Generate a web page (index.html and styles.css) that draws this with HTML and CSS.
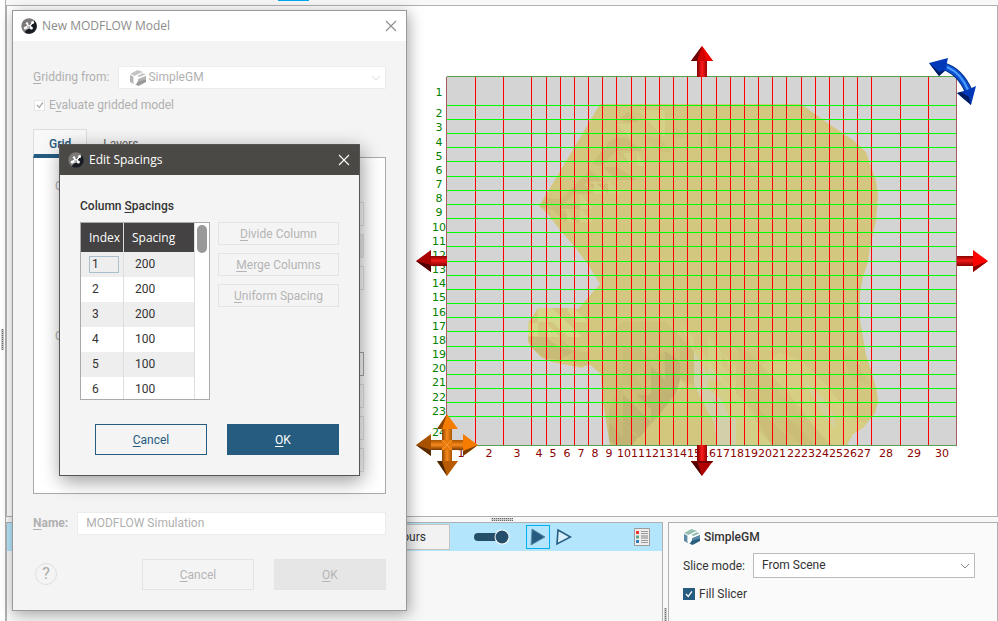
FILE: index.html
```html
<!DOCTYPE html>
<html lang="en">
<head>
<meta charset="utf-8">
<title>New MODFLOW Model</title>
<link rel="stylesheet" href="styles.css">
</head>
<body>
<svg class="defs" width="0" height="0" aria-hidden="true">
  <defs>
    <symbol id="app" viewBox="0 0 16 16">
      <circle cx="8" cy="8" r="7.7" fill="#7d7979"/>
      <path d="M13.6 2.7A7.700 7.700 0 0 1 3.400 14.200L7 11z" fill="#191b22"/>
      <path d="M4.200 9.800 6.600 7.800H9L11.600 4.600M6 5.200 7.400 7.600M9 7.800 10.200 9.800 5 10.200" fill="none" stroke="#fff" stroke-width="1.200"/>
      <circle cx="11.600" cy="4.600" r="1.500" fill="#fff"/><circle cx="6" cy="5.400" r="1.200" fill="#fff"/><circle cx="4.200" cy="10" r="1.500" fill="#fff"/><circle cx="10.400" cy="10" r="1.500" fill="#fff"/>
    </symbol>
    <symbol id="close" viewBox="0 0 12 12"><path d="M1 1 11 11M11 1 1 11" fill="none" stroke="currentColor" stroke-width="1.1"/></symbol>
    <symbol id="chev" viewBox="0 0 10 6"><path d="M1 1 5 5 9 1" fill="none" stroke="currentColor"/></symbol>
    <symbol id="tick" viewBox="0 0 8 8"><path d="M1 4 3.2 6.4 7 1.4" fill="none" stroke="currentColor" stroke-width="1.3"/></symbol>
    <symbol id="cube" viewBox="0 0 16 16">
      <path class="c1" d="M0 4 7.500 0 13 2 5 6z"/>
      <path class="c2" d="M0 5 4 7V14L0 12z"/>
      <path class="c1" d="M7 5.500 12.500 3.200 16 4.500 9.500 7.300z"/>
      <path class="c2" d="M8 9 16 5.500V9L8 12.500z"/>
      <path class="c3" d="M7 12 16 9V12L8.500 16 5.500 14.600z"/>
      <path d="M4 13V7L11.500 3M6.500 13.500V8L9 7.800 16 5" fill="none" stroke="#fff" stroke-width="1.200"/>
    </symbol>
    <linearGradient id="rv"><stop offset="0" stop-color="#7a0000"/><stop offset=".5" stop-color="#ff1c1c"/><stop offset="1" stop-color="#900"/></linearGradient>
    <linearGradient id="rh" x2="0" y2="1"><stop offset="0" stop-color="#8a0000"/><stop offset=".45" stop-color="#f01818"/><stop offset="1" stop-color="#800"/></linearGradient>
    <linearGradient id="ov"><stop offset="0" stop-color="#8a4300"/><stop offset=".5" stop-color="#f98a1c"/><stop offset="1" stop-color="#a85400"/></linearGradient>
    <linearGradient id="oh" x2="0" y2="1"><stop offset="0" stop-color="#a85400"/><stop offset=".5" stop-color="#f98a1c"/><stop offset="1" stop-color="#7a3a00"/></linearGradient>
    <clipPath id="body"><path d="M600 104H801L829 124 853 140 866 152 871 166 876 181 878 195 877 208 876 221 872 238 870 247 868 262 863 277 860 293V320L863 337 866 355 872 373 877 392 878 402 875 413 863 428 853 434 847 445H610L603 403 601 374 589 364 582 368 567 365 552 362 542 358 532 348 528 342V323L538 308H568L578 309 600 284 587 263 574 246 560 230 547 213 539 206 547 193 574 148z"/></clipPath>
  </defs>
</svg>

<div class="app">
  <div class="rail"><span class="grip grip-v"></span></div>
  <main class="main">
    <div class="strip"><span class="strip-tab"></span></div>
    <section class="scene">
      <svg class="scene-svg" width="590" height="510" viewBox="407 6 590 510" role="img" aria-label="Model grid">
        <rect x="446" y="76" width="511" height="370" fill="#d4d4d4"/>
        <g clip-path="url(#body)">
          <rect x="520" y="100" width="370" height="350" fill="#d3c77f"/>
          <g fill="#c9ba76" opacity=".7">
            <path d="M592 164 608 142 616 138H627L641 150 655 151H616L602 166z"/>
            <path d="M620 119 628 112 640 122H625zM575 185 590 170 603 181H590L575 190z"/>
            <path d="M539 206 547 198 560 199 575 185 582 182 592 194H575L562 205H580L594 209H547z"/>
            <path d="M552 209H560L580 222H566zM588 184H610L622 194H602zM603 167H617L637 180H617z"/>
            <path d="M616 152H631V166zM645 138H659V152zM659 138 673 152H659zM673 124 687 138H673z" opacity=".6"/>
            <path d="M708 124 722 150 708 145zM744 160 760 176H744z" opacity=".4"/>
          </g>
          <g fill="#d6d58c" opacity=".7">
            <path d="M638 110H651L665 124V138L651 124zM651 110 665 110V124zM616 124 631 138V124z"/>
            <path d="M623 153 631 153V166zM637 152 645 166H637zM580 209V194L594 209zM580 209 594 222H580zM594 194V181L608 194z"/>
            <path d="M567 208 574 222H567zM608 181 622 194H608z"/>
          </g>
          <g fill="#d6d88f" opacity=".8">
            <path d="M538 308H552V322H538zM552 308 567 322V336L552 322zM567 308H574L588 322H574zM546 323 560 337H546zM567 322 582 337H567zM528 323H538V336H528z"/>
          </g>
          <g fill="#c0b272">
            <path d="M528 337H545L560 348 575 351 560 360 545 358 532 348z" opacity=".6"/>
            <path d="M560 337 574 350 588 353V366L574 364 560 350z" opacity=".3"/>
          </g>
          <g fill="#c8ba76">
            <path d="M603 340 623 322 666 322 680 337 694 352V385L680 380 660 415 632 445H609L603 395z" opacity=".45"/>
            <path d="M623 346H637L651 360 665 351 680 361V380L676 393 662 411 650 425 632 445H609V410L616 395 623 380z" opacity=".6"/>
            <path d="M680 338 694 351V385L680 378z" opacity=".6"/>
          </g>
          <g fill="#b3a66e" opacity=".45">
            <path d="M623 394 637 408 651 422 640 437 623 423zM651 366 665 380 680 380 676 393 662 411 651 422V409L637 395 651 395z"/>
            <path d="M665 366 680 380H665zM609 408 623 423 637 437 632 445H616L609 440zM665 351 680 362V380L665 366z"/>
            <path d="M651 394 665 394 672 397 658 415zM637 408 651 422 640 437H637z"/>
          </g>
          <g fill="#d4c780" opacity=".35">
            <path d="M609 408V423L623 437V423zM623 380V394L637 408V394zM637 366V380L651 394V380zM651 352V366L665 380V366zM637 408 651 422V408z"/>
          </g>
          <path d="M680 380 686 386 682 387 678 392z" fill="#d7d08d"/>
          <path d="M694 350H701L717 372 744 402 772 445H717L715 423 694 385z" fill="#d6d78d" opacity=".5"/>
          <path d="M708 337 722 352V366L736 380V395L722 382 708 366zM680 324 694 337V352zM722 352 736 366V380z" fill="#d6d78d" opacity=".5"/>
          <path d="M694 352 701 362 708 376V388L722 400 729 416 736 420V445H717L714 423 694 385z" fill="#d2d0b6" opacity=".75"/>
          <path d="M708 366 721 378 719 381 708 380z" fill="#d2d0b6" opacity=".6"/>
          <path d="M780 352 800 360 826 384 850 416 868 424 850 445H832L780 392 760 366z" fill="#d6d68a" opacity=".45"/>
          <path d="M808 385 822 396 835 418 835 430 820 410zM801 375 808 385 820 398 812 396z" fill="#d4d2ac" opacity=".6"/>
          <path d="M737 345 757 360 790 395 828 445H772L744 395z" fill="#cbbc76" opacity=".4"/>
          <path d="M758 408 772 422 786 436V445H772L758 430zM786 416 801 430 815 445H801L786 430z" fill="#c6b774" opacity=".4"/>
          <path d="M843 352 857 362 870 385 850 378z" fill="#cbbc76" opacity=".4"/>
        </g>
        <path d="M475.500 77V445M503.500 77V445M531.500 77V445M546.500 77V445M560.500 77V445M574.500 77V445M588.500 77V445M602.500 77V445M616.500 77V445M631.500 77V445M645.500 77V445M659.500 77V445M673.500 77V445M687.500 77V445M701.500 77V445M716.500 77V445M730.500 77V445M744.500 77V445M758.500 77V445M772.500 77V445M786.500 77V445M801.500 77V445M815.500 77V445M829.500 77V445M843.500 77V445M857.500 77V445M871.500 77V445M900.500 77V445M928.500 77V445" stroke="#f00"/>
        <path d="M447 105.500H956M447 119.500H956M447 133.500H956M447 147.500H956M447 161.500H956M447 176.500H956M447 190.500H956M447 204.500H956M447 218.500H956M447 232.500H956M447 246.500H956M447 261.500H956M447 275.500H956M447 289.500H956M447 303.500H956M447 317.500H956M447 331.500H956M447 346.500H956M447 360.500H956M447 374.500H956M447 388.500H956M447 402.500H956M447 416.500H956" stroke="#0f0"/>
        <path d="M447 76.500H957M447 445.500H957" stroke="#55a055"/>
        <path d="M446.500 77V446M956.500 77V446" stroke="#a85c5c"/>
        <g class="row-label">
          <text x="439" y="96">1</text><text x="439" y="117">2</text><text x="439" y="131">3</text><text x="439" y="146">4</text><text x="439" y="160">5</text><text x="439" y="174">6</text><text x="439" y="188">7</text><text x="439" y="202">8</text><text x="439" y="216">9</text><text x="439" y="231">10</text><text x="439" y="245">11</text><text x="439" y="259">12</text><text x="439" y="273">13</text><text x="439" y="287">14</text><text x="439" y="301">15</text><text x="439" y="316">16</text><text x="439" y="330">17</text><text x="439" y="344">18</text><text x="439" y="358">19</text><text x="439" y="372">20</text><text x="439" y="386">21</text><text x="439" y="401">22</text><text x="439" y="415">23</text><text x="439" y="436">24</text>
        </g>
        <g class="col-label">
          <text x="461" y="457">1</text><text x="489" y="457">2</text><text x="517" y="457">3</text><text x="539" y="457">4</text><text x="553" y="457">5</text><text x="567" y="457">6</text><text x="581" y="457">7</text><text x="595" y="457">8</text><text x="609" y="457">9</text><text x="624" y="457">10</text><text x="638" y="457">11</text><text x="652" y="457">12</text><text x="666" y="457">13</text><text x="680" y="457">14</text><text x="694" y="457">15</text><text x="709" y="457">16</text><text x="723" y="457">17</text><text x="737" y="457">18</text><text x="751" y="457">19</text><text x="765" y="457">20</text><text x="779" y="457">21</text><text x="794" y="457">22</text><text x="808" y="457">23</text><text x="822" y="457">24</text><text x="836" y="457">25</text><text x="850" y="457">26</text><text x="864" y="457">27</text><text x="886" y="457">28</text><text x="914" y="457">29</text><text x="942" y="457">30</text>
        </g>
        <rect x="697" y="60" width="10" height="17" fill="url(#rv)"/>
        <path d="M702 46 713 61H691z" fill="#d00000"/><path d="M702 46 691 61H697z" fill="#6a0000"/><path d="M702 46 707 61H713z" fill="#f00000"/>
        <rect x="697" y="445" width="10" height="17" fill="url(#rv)"/>
        <path d="M702 476 713 461H691z" fill="#b00000"/><path d="M702 476 691 461H697z" fill="#4a0000"/><path d="M691 461H713L712 463H692z" fill="#700000"/>
        <rect x="430" y="256" width="17" height="10" fill="url(#rh)"/>
        <path d="M416 261 431 250V272z" fill="#a80000"/><path d="M416 261 431 265V272z" fill="#500000"/>
        <rect x="957" y="256" width="17" height="10" fill="url(#rh)"/>
        <path d="M988 261 973 250V272z" fill="#ff0000"/><path d="M988 261 973 267V272z" fill="#8a0000"/>
        <rect x="442" y="428" width="10" height="34" fill="url(#ov)"/>
        <rect x="430" y="440" width="34" height="10" fill="url(#oh)"/>
        <path d="M442 440H452V450H442z" fill="#e87a0c"/><path d="M442 440 452 450M442 450 452 440" stroke="#f99a38"/>
        <path d="M447 414 458 429H437z" fill="#f57c00"/><path d="M447 414 437 429H442z" fill="#8a4300"/>
        <path d="M478 445 463 434V456z" fill="#f57c00"/><path d="M478 445 463 451V456z" fill="#7a3a00"/>
        <path d="M447 476 458 461H437z" fill="#b85a00"/><path d="M447 476 437 461H442z" fill="#4a2400"/>
        <path d="M416 445 431 434V456z" fill="#a85200"/><path d="M416 445 431 450V456z" fill="#5a2b00"/>
        <path d="M943 66Q960 71 969 92" fill="none" stroke="#002a7a" stroke-width="8"/>
        <path d="M943 66Q960 71 969 92" fill="none" stroke="#0a50d0" stroke-width="6"/>
        <path d="M947 67Q961 73 968 90" fill="none" stroke="#4a9cff" stroke-width="2"/>
        <path d="M929 63 948 58 945 71 939 76z" fill="#0038b8"/><path d="M929 63 939 72 945 70 939 76z" fill="#001c60"/>
        <path d="M971 105 976 86 967 90 957 93z" fill="#0038b8"/><path d="M971 105 957 93 961 92 969 97z" fill="#001c60"/>
      </svg>
    </section>
    <div class="split-h"><span class="grip grip-h"></span></div>
    <div class="bottom">
      <section class="shapes">
        <div class="toolbar">
          <button class="tb-text" type="button">Contours</button>
          <button class="tb-icon toggle" type="button" aria-label="Toggle"><svg width="36" height="16" viewBox="0 0 36 16"><rect x="0" y="4" width="30" height="8" rx="4" fill="#254e6a"/><circle cx="28" cy="8" r="7.5" fill="#fff"/><circle cx="28" cy="8" r="6.500" fill="#254e6a"/></svg></button>
          <button class="tb-icon active" type="button" aria-label="Filled"><svg width="16" height="18" viewBox="0 0 16 18"><path d="M2 1 15 9 1 17z" fill="#265c80" stroke="#5d8ca8"/></svg></button>
          <button class="tb-icon" type="button" aria-label="Outline"><svg width="16" height="18" viewBox="0 0 16 18"><path d="M2 2 14.500 9 1 16z" fill="#d8f0fc" stroke="#265c80" stroke-width="1.600"/></svg></button>
          <button class="tb-icon legend" type="button" aria-label="Legend"><svg width="16" height="18" viewBox="0 0 16 18"><path d="M.5.5H15.500V17.500H.5z" fill="#eee" stroke="#9b9b9b"/><path d="M2 3h3v3H2z" fill="#e33"/><path d="M2 7.500h3v3H2z" fill="#5aa888"/><path d="M2 12h3v3H2z" fill="#3478b8"/><path d="M7 3.500h7M7 5.500h7M7 12.500h7M7 14.500h7" stroke="#999"/><path d="M7 7h7v4H7z" fill="#b8b8b8"/></svg></button>
        </div>
      </section>
      <div class="split-v"><span class="grip grip-v"></span></div>
      <section class="props">
        <h2 class="props-title"><svg class="cube teal" width="16" height="16"><use href="#cube"/></svg>SimpleGM</h2>
        <div class="props-row">
          <label for="slice">Slice mode:</label>
          <span class="combo"><select id="slice"><option>From Scene</option></select><svg class="chev" width="10" height="6"><use href="#chev"/></svg></span>
        </div>
        <label class="check on"><span class="box"><input type="checkbox" checked><svg width="8" height="8"><use href="#tick"/></svg></span>Fill Slicer</label>
      </section>
    </div>
  </main>
</div>

<div class="window model" role="dialog" aria-labelledby="t1">
  <header class="titlebar"><svg width="16" height="16"><use href="#app"/></svg><span id="t1">New MODFLOW Model</span><button class="close" type="button" aria-label="Close"><svg width="12" height="12"><use href="#close"/></svg></button></header>
  <div class="model-body">
    <div class="field">
      <label for="from"><u>G</u>ridding from:</label>
      <span class="combo"><svg class="cube gray" width="16" height="16"><use href="#cube"/></svg><select id="from" disabled><option>SimpleGM</option></select><svg class="chev" width="10" height="6"><use href="#chev"/></svg></span>
    </div>
    <label class="check"><span class="box"><input type="checkbox" checked disabled><svg width="8" height="8"><use href="#tick"/></svg></span><span>E<u>v</u>aluate gridded model</span></label>
    <div class="tabs"><button class="tab current" type="button">Grid</button><button class="tab" type="button">Layers</button></div>
    <div class="panel">
      <div class="group"><span>C</span><div class="group-items"><button disabled type="button" aria-label="Item"></button><button class="dim" disabled type="button" aria-label="Item"></button><button disabled type="button" aria-label="Item"></button></div></div>
      <div class="group"><span>C</span><div class="group-items"><button class="strong" disabled type="button" aria-label="Item"></button><button disabled type="button" aria-label="Item"></button><button disabled type="button" aria-label="Item"></button><button disabled type="button" aria-label="Item"></button></div></div>
    </div>
    <div class="field name-field"><label for="name"><u>N</u>ame:</label><input id="name" type="text" value="MODFLOW Simulation" disabled></div>
    <footer class="actions"><button class="help" type="button" disabled>?</button><button class="btn" type="button" disabled><u>C</u>ancel</button><button class="btn solid" type="button" disabled><u>O</u>K</button></footer>
  </div>
</div>

<div class="window spacing" role="dialog" aria-labelledby="t2">
  <header class="titlebar dark"><svg width="16" height="16"><use href="#app"/></svg><span id="t2">Edit Spacings</span><button class="close" type="button" aria-label="Close"><svg width="12" height="12"><use href="#close"/></svg></button></header>
  <div class="spacing-body">
    <h2 class="spacing-title">Column <u>S</u>pacings</h2>
    <div class="columns">
      <div class="list">
        <table>
          <thead><tr><th>Index</th><th>Spacing</th></tr></thead>
          <tbody>
            <tr><td class="editing"><input type="text" value="1" aria-label="Index"></td><td>200</td></tr>
            <tr><td>2</td><td>200</td></tr>
            <tr><td>3</td><td>200</td></tr>
            <tr><td>4</td><td>100</td></tr>
            <tr><td>5</td><td>100</td></tr>
            <tr><td>6</td><td>100</td></tr>
          </tbody>
        </table>
        <span class="thumb"></span>
      </div>
      <div class="ops"><button class="btn" type="button" disabled><u>D</u>ivide Column</button><button class="btn" type="button" disabled><u>M</u>erge Columns</button><button class="btn" type="button" disabled><u>U</u>niform Spacing</button></div>
    </div>
    <footer class="actions"><button class="btn primary-outline" type="button"><u>C</u>ancel</button><button class="btn primary" type="button"><u>O</u>K</button></footer>
  </div>
</div>
</body>
</html>
```

FILE: styles.css
```css
* { box-sizing: border-box; }

body {
  margin: 0;
  height: 100vh;
  overflow: hidden;
  position: relative;
  background: #fff;
  color: #333;
  font: 12px/16px Roboto, "Liberation Sans", sans-serif;
}

button, input, select { font: inherit; color: inherit; margin: 0; padding: 0; border: 0; background: none; }
h2 { margin: 0; font-size: 12px; line-height: 16px; font-weight: 500; }
u { text-underline-offset: 2px; }
svg { display: block; flex: none; }
.defs { position: absolute; }

/* Application behind the windows */
.app { display: flex; height: 100vh; }
.rail { flex: 0 0 5px; padding: 53vh 0 0 1px; }
.main {
  flex: 1;
  min-width: 0;
  display: grid;
  grid-template-rows: 5px minmax(0, 1fr) 5px 99px;
  background: #f8f8f8;
  border-left: 1px solid #b0b0b0;
}
.strip { padding-left: 272px; }
.strip-tab { display: block; width: 31px; height: 1px; background: #00a8f0; }
.scene {
  display: flex;
  justify-content: flex-end;
  align-items: center;
  overflow: hidden;
  background: #fff;
  border: 1px solid #b0b0b0;
}
.row-label, .col-label { font: 11px "DejaVu Sans", sans-serif; text-anchor: middle; }
.row-label { fill: #008000; }
.col-label { fill: #8b0000; }

.grip { display: block; background: conic-gradient(#666 25%, #ccc 0) 0 0 / 2px 2px; }
.grip-h { width: 22px; height: 3px; }
.grip-v { width: 3px; height: 21px; }
.split-h { display: flex; justify-content: center; align-items: center; }
.split-v { flex: 0 0 5px; padding: 86px 0 0 1px; overflow: hidden; }

.bottom { display: flex; min-width: 0; overflow: hidden; }
.shapes { flex: 1; border: 1px solid #b0b0b0; border-bottom: 0; background: #f7f7f7; }
.toolbar { display: flex; justify-content: flex-end; align-items: center; height: 28px; padding-right: 12px; background: #b3e5fc; }
.tb-text { width: 120px; height: 26px; padding-right: 23px; text-align: right; background: #f2f2f2; border: 1px solid #c4c4c4; }
.tb-icon { display: flex; align-items: center; justify-content: center; height: 24px; min-width: 24px; }
.toggle { margin: 0 16px 0 24px; }
.active { border: 1px solid #00aeef; margin-right: 2px; }
.legend { min-width: 16px; margin-left: 58px; }

.props { flex: 0 0 330px; padding: 6px 22px 0 14px; background: #fafafa; border: 1px solid #b0b0b0; border-bottom: 0; }
.props-title { display: flex; align-items: center; gap: 4px; padding-left: 1px; }
.props-row { display: flex; align-items: center; gap: 8px; margin-top: 8px; }
.props .combo { height: 25px; border: 1px solid #bbb; }
.props .chev { color: #888; right: 4px; }
.props select { padding-left: 8px; }
.props .check { margin-top: 8px; }

.combo { flex: 1; position: relative; display: flex; align-items: center; background: #fff; }
.combo select { flex: 1; height: 100%; padding-bottom: 2px; appearance: none; opacity: 1; }
.chev { position: absolute; right: 4px; pointer-events: none; }
.cube.teal { --a: #94bfb0; --b: #5c8ba8; --c: #2b5f80; }
.cube.gray { --a: #c4c4c4; --b: #b4b4b4; --c: #999; }
.c1 { fill: var(--a); }
.c2 { fill: var(--b); }
.c3 { fill: var(--c); }

.check { display: flex; align-items: center; gap: 4px; }
.box { display: grid; place-items: center; width: 11px; height: 11px; background: #fff; outline: 1px solid #e6e6e6; outline-offset: -1px; color: #aaa; }
.box > * { grid-area: 1 / 1; }
.box input { appearance: none; width: 11px; height: 11px; }
.on .box { width: 12px; height: 12px; background: #265c80; outline: 0; color: #fff; }

/* Windows */
.window { position: absolute; background: #f4f4f4; border: 1px solid #999; }
.titlebar { display: flex; align-items: center; gap: 5px; height: 30px; padding: 0 9px 0 8px; background: #fff; color: #8c8c8c; font-family: "Open Sans", "Noto Sans", sans-serif; }
.titlebar.dark { background: #4b4946; color: #fff; }
.close { margin-left: auto; }
.btn { width: 112px; height: 31px; border: 1px solid #e4e4e4; text-align: center; }
.btn:disabled { color: #b4b4b4; }
.solid { background: #e6e6e6; }
.primary-outline { border-color: #265c80; color: #265c80; }
.primary { border-color: #265c80; background: #265c80; color: #fff; }
.actions { display: flex; justify-content: flex-end; gap: 20px; margin-top: 24px; }

.model { left: 12px; top: 10px; width: 395px; color: #b0b0b0; box-shadow: 2px 3px 14px rgba(0, 0, 0, .35); }
.model-body { padding: 25px 20px 20px; }
.field { display: flex; align-items: center; gap: 9px; }
.field label { padding-bottom: 2px; }
.field .combo, .name-field input { height: 23px; border: 1px solid #ececec; background: #fff; }
.field .combo { padding-left: 11px; gap: 2px; }
.field .chev { color: #ddd; }
.model-body .check { margin: 8px 0 16px; padding-left: 1px; }
.tabs { display: flex; height: 29px; }
.tab { padding: 0 16px; color: #666; }
.current { background: #f8f8f8; border: 1px solid #ddd; border-bottom: 4px solid #265c80; color: #265c80; font-weight: 500; padding: 3px 15px 0; }
.panel { margin-top: -1px; height: 337px; padding: 20px 21px; background: #fff; border: 1px solid #aaa; }
.group { display: flex; justify-content: space-between; height: 150px; }
.group-items { display: flex; flex-direction: column; gap: 8px; width: 120px; padding-top: 24px; }
.group-items button { height: 24px; border: 1px solid #e4e4e4; }
.group-items .dim { background: #eee; }
.group-items .strong { border-color: #aaa; }
.name-field { margin-top: 18px; }
.name-field label { font-weight: 700; }
.name-field input { flex: 1; min-width: 0; padding: 0 0 2px 8px; }
.help { width: 22px; height: 22px; margin: 4px auto 0 2px; border: 1px solid #e0e0e0; border-radius: 50%; font-size: 16px; color: #aaa; }

.spacing { left: 59px; top: 144px; width: 301px; border-color: #555; box-shadow: 2px 5px 18px rgba(0, 0, 0, .4); }
.spacing-body { padding: 23px 20px 20px; }
.columns { display: flex; gap: 8px; margin-top: 8px; }
.list { display: flex; width: 130px; height: 178px; overflow: hidden; background: #fff; border: 1px solid #aaa; }
table { border-spacing: 0; table-layout: fixed; width: 114px; height: 179px; }
th { height: 29px; padding: 0 0 0 8px; background: #444242; color: #fff; border-right: 1px solid #ddd; text-align: left; font-weight: 400; font-family: "Open Sans", "Noto Sans", sans-serif; }
th:first-child { width: 43px; }
td { height: 25px; padding: 0 0 2px 11px; border-right: 1px solid #ddd; }
tbody tr:nth-child(odd) { background: #eee; }
td.editing { padding: 0 0 0 8px; }
.editing input { display: block; width: 30px; height: 17px; padding: 0 0 2px 2px; border: 1px solid #a9bfce; }
.thumb { width: 10px; height: 28px; margin: 2px 0 0 2px; border-radius: 5px; background: #999; }
.ops { flex: 1; display: flex; flex-direction: column; gap: 8px; }
.ops .btn { width: 100%; height: 23px; }
```
